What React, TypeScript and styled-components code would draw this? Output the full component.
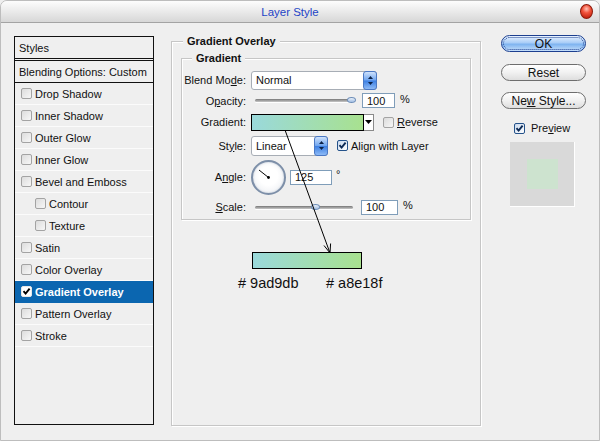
import React from 'react';
import styled, { createGlobalStyle } from 'styled-components';

const GlobalStyle = createGlobalStyle`
  html, body {
    margin: 0;
    padding: 0;
    background: #efefef;
  }
  body {
    font-family: "Liberation Sans", Arial, sans-serif;
    font-size: 11px;
    color: #111;
  }
`;

const styleItems = [
  { name: 'Drop Shadow' },
  { name: 'Inner Shadow' },
  { name: 'Outer Glow' },
  { name: 'Inner Glow' },
  { name: 'Bevel and Emboss' },
  { name: 'Contour', indent: true },
  { name: 'Texture', indent: true },
  { name: 'Satin' },
  { name: 'Color Overlay' },
  { name: 'Gradient Overlay', active: true },
  { name: 'Pattern Overlay' },
  { name: 'Stroke' },
];

type Tone = 'gray' | 'blue' | 'white';

function Check({ tone = 'gray', on = false }: { tone?: Tone; on?: boolean }) {
  return (
    <CheckBox $tone={tone}>
      {on && (
        <svg width="9" height="9" viewBox="0 0 9 9">
          <path d="M1.5 4.2 L3.6 6.6 L7.6 1.6" fill="none" stroke={tone === 'white' ? '#000' : '#0d2a55'} strokeWidth="1.9" />
        </svg>
      )}
    </CheckBox>
  );
}

function Spinner() {
  return (
    <SpinButton>
      <svg width="7" height="11" viewBox="0 0 7 11">
        <path d="M3.5 1 L6 4 L1 4 Z" fill="#0b2146" />
        <path d="M3.5 10 L6 7 L1 7 Z" fill="#0b2146" />
      </svg>
    </SpinButton>
  );
}

function Slider({ width, value }: { width: number; value: number }) {
  return (
    <Track $w={width}>
      <Thumb style={{ left: `${value}%` }} />
    </Track>
  );
}

export default function App() {
  return (
    <>
      <GlobalStyle />
      <Window>
        <TitleBar>
          <Title>Layer Style</Title>
          <CloseButton />
        </TitleBar>

        <Body>
          {/* STYLES LIST */}
          <StylesPanel>
            <PanelHeader>Styles</PanelHeader>
            <BlendRow>Blending Options: Custom</BlendRow>
            {styleItems.map((item) => (
              <StyleItem key={item.name} $indent={!!item.indent} $active={!!item.active}>
                <Check tone={item.active ? 'white' : 'gray'} on={!!item.active} />
                {item.name}
              </StyleItem>
            ))}
          </StylesPanel>

          {/* SETTINGS */}
          <Middle>
            <OuterGroup>
              <OuterLegend>Gradient Overlay</OuterLegend>
              <InnerGroup>
                <InnerLegend>Gradient</InnerLegend>
                <Fields>
                  <Row $h={20}>
                    <Label>Blend Mo<u>d</u>e:</Label>
                    <Select $w={126} $h={19}>
                      Normal
                      <Spinner />
                    </Select>
                  </Row>
                  <Row $h={21}>
                    <Label>O<u>p</u>acity:</Label>
                    <SliderWrap>
                      <Slider width={100} value={97} />
                    </SliderWrap>
                    <NumberInput $w={33} readOnly value="100" />
                    <Unit>%</Unit>
                  </Row>
                  <Row $h={22}>
                    <Label>Gradient:</Label>
                    <GradientField />
                    <DropButton>
                      <svg width="7" height="4" viewBox="0 0 7 4">
                        <path d="M0 0 L7 0 L3.5 4 Z" fill="#000" />
                      </svg>
                    </DropButton>
                    <CheckLabel $gap={9}>
                      <Check tone="gray" />
                      <span><u>R</u>everse</span>
                    </CheckLabel>
                  </Row>
                  <Row $h={25}>
                    <Label>St<u>y</u>le:</Label>
                    <Select $w={77} $h={20}>
                      Linear
                      <Spinner />
                    </Select>
                    <CheckLabel $gap={9}>
                      <Check tone="blue" on />
                      <span>Align with Layer</span>
                    </CheckLabel>
                  </Row>
                  <Row $h={38}>
                    <Label>A<u>n</u>gle:</Label>
                    <Dial>
                      <svg width="31" height="31" viewBox="0 0 31 31">
                        <line x1="15.5" y1="15.5" x2="6" y2="8" stroke="#000" strokeWidth="1" />
                        <circle cx="15.5" cy="15.5" r="1.4" fill="#000" />
                      </svg>
                    </Dial>
                    <NumberInput $w={42} $ml={4} readOnly value="125" />
                    <Degree>°</Degree>
                  </Row>
                  <Row $h={22}>
                    <Label><u>S</u>cale:</Label>
                    <SliderWrap>
                      <Slider width={98} value={62} />
                    </SliderWrap>
                    <NumberInput $w={37} $ml={8} readOnly value="100" />
                    <Unit>%</Unit>
                  </Row>
                </Fields>
              </InnerGroup>

              <Swatch />
              <HexRow>
                <Hex># 9ad9db</Hex>
                <Hex># a8e18f</Hex>
              </HexRow>
            </OuterGroup>

            <Pointer width="310" height="391" viewBox="0 0 310 391">
              <line x1="114" y1="95" x2="159" y2="218" stroke="#000" strokeWidth="1" />
              <polyline points="153,210.5 159,218 159.6,208.5" fill="none" stroke="#000" strokeWidth="1" />
            </Pointer>
          </Middle>

          {/* BUTTONS */}
          <Actions>
            <PillButton $primary>OK</PillButton>
            <PillButton $mt={12}>Reset</PillButton>
            <PillButton $mt={11}>
              <span>Ne<u>w</u> Style...</span>
            </PillButton>
            <PreviewToggle>
              <Check tone="blue" on />
              <span>Pre<u>v</u>iew</span>
            </PreviewToggle>
            <PreviewBox>
              <PreviewSquare />
            </PreviewBox>
          </Actions>
        </Body>
      </Window>
    </>
  );
}

const Window = styled.div`
  width: 600px;
  height: 441px;
  box-sizing: border-box;
  border: 1px solid #bdbdbd;
  border-radius: 7px 7px 0 0;
  background: #efefef;
  display: flex;
  flex-direction: column;
  overflow: hidden;
`;

const TitleBar = styled.div`
  height: 22px;
  flex-shrink: 0;
  box-sizing: border-box;
  border-bottom: 1px solid #a3a3a3;
  background: linear-gradient(#fdfdfd, #ececec 45%, #d7d7d7);
  display: grid;
  grid-template-columns: 1fr auto 1fr;
  align-items: center;
  padding: 0 6px;
`;

const Title = styled.div`
  grid-column: 2;
  padding-right: 20px;
  color: #2444c6;
  font-size: 11.5px;
`;

const CloseButton = styled.div`
  grid-column: 3;
  justify-self: end;
  width: 13px;
  height: 15px;
  box-sizing: border-box;
  border-radius: 50%;
  border: 1px solid #8d1b0c;
  background: radial-gradient(circle at 50% 30%, #ffc2b6 0, #f2533c 38%, #b41300 100%);
`;

const Body = styled.div`
  flex: 1;
  display: flex;
  align-items: flex-start;
  padding: 12px 0 0 13px;
`;

const StylesPanel = styled.div`
  width: 140px;
  height: 389px;
  margin-top: 1px;
  box-sizing: border-box;
  border: 1px solid #111;
  background: #efefef;
`;

const PanelHeader = styled.div`
  height: 21px;
  display: flex;
  align-items: center;
  padding-left: 4px;
  border-bottom: 3px double #111;
`;

const BlendRow = styled.div`
  height: 21px;
  display: flex;
  align-items: center;
  padding-left: 4px;
  border-bottom: 1px solid #111;
  white-space: nowrap;
`;

const StyleItem = styled.div<{ $indent: boolean; $active: boolean }>`
  height: 21px;
  display: flex;
  align-items: center;
  gap: 3px;
  padding-left: ${(p) => (p.$indent ? 20 : 6)}px;
  border-bottom: 1px solid ${(p) => (p.$active ? '#0b66b0' : '#fbfbfb')};
  background: ${(p) => (p.$active ? '#0b66b0' : 'transparent')};
  color: ${(p) => (p.$active ? '#fff' : '#111')};
  font-weight: ${(p) => (p.$active ? 'bold' : 'normal')};
  white-space: nowrap;
`;

const CheckBox = styled.span<{ $tone: Tone }>`
  width: 11px;
  height: 11px;
  flex-shrink: 0;
  box-sizing: border-box;
  border-radius: 2px;
  display: flex;
  align-items: center;
  justify-content: center;
  border: 1px solid
    ${(p) => (p.$tone === 'blue' ? '#24528a' : p.$tone === 'white' ? '#e8e8e8' : '#a3a3a3')};
  background: ${(p) =>
    p.$tone === 'blue'
      ? 'linear-gradient(135deg, #c9d9ee, #ffffff)'
      : p.$tone === 'white'
      ? '#fff'
      : 'linear-gradient(135deg, #dcdcdc, #f7f7f7)'};
`;

const Middle = styled.div`
  position: relative;
  margin-left: 17px;
  width: 310px;
`;

const OuterGroup = styled.fieldset`
  margin: 0;
  padding: 0 9px;
  min-width: 0;
  width: 310px;
  height: 391px;
  box-sizing: border-box;
  border: 1px solid #c6c6c6;
  box-shadow: inset 1px 1px 0 #fff, 1px 1px 0 #fff;
`;

const OuterLegend = styled.legend`
  margin-left: 2px;
  padding: 0 4px;
  font-weight: bold;
  line-height: 13px;
  background: #efefef;
`;

const InnerGroup = styled.fieldset`
  margin: 4px 0 0;
  padding: 0;
  min-width: 0;
  width: 290px;
  box-sizing: border-box;
  border: 1px solid #c6c6c6;
  box-shadow: inset 1px 1px 0 #fff, 1px 1px 0 #fff;
`;

const InnerLegend = styled.legend`
  margin-left: 10px;
  padding: 0 4px;
  font-weight: bold;
  line-height: 13px;
  background: #efefef;
`;

const Fields = styled.div`
  display: flex;
  flex-direction: column;
  padding: 5px 0 1px;
`;

const Row = styled.div<{ $h: number }>`
  display: flex;
  align-items: center;
  height: ${(p) => p.$h}px;
`;

const Label = styled.span`
  width: 64px;
  padding-right: 5px;
  flex-shrink: 0;
  text-align: right;
  white-space: nowrap;
`;

const Select = styled.div<{ $w: number; $h: number }>`
  width: ${(p) => p.$w}px;
  height: ${(p) => p.$h}px;
  box-sizing: border-box;
  display: flex;
  align-items: center;
  padding-left: 4px;
  border: 1px solid #a7adb5;
  border-radius: 3px;
  background: #fff;
`;

const SpinButton = styled.span`
  margin-left: auto;
  width: 14px;
  height: calc(100% + 2px);
  margin-right: -1px;
  box-sizing: border-box;
  border: 1px solid #4a78c4;
  border-radius: 3px;
  background: linear-gradient(#cfe2fc, #6fa5ef 48%, #3c7fe2 52%, #8dbaf6);
  display: flex;
  align-items: center;
  justify-content: center;
`;

const SliderWrap = styled.div`
  margin-left: 4px;
  display: flex;
  align-items: center;
`;

const Track = styled.div<{ $w: number }>`
  position: relative;
  width: ${(p) => p.$w}px;
  height: 3px;
  border-radius: 2px;
  background: linear-gradient(#767676, #c9c9c9);
  box-shadow: 0 1px 0 #fff;
`;

const Thumb = styled.span`
  position: absolute;
  top: -2px;
  width: 9px;
  height: 6px;
  margin-left: -5px;
  box-sizing: border-box;
  border-radius: 50%;
  border: 1px solid #6f8fb8;
  background: linear-gradient(#eef4fc, #9fbce2);
`;

const NumberInput = styled.input<{ $w: number; $ml?: number }>`
  width: ${(p) => p.$w}px;
  height: 15px;
  margin: 0 0 0 ${(p) => p.$ml ?? 7}px;
  padding: 0 0 0 4px;
  box-sizing: border-box;
  border: 1px solid #7f9db9;
  background: #fff;
  font: 11px "Liberation Sans", Arial, sans-serif;
  color: #111;
  outline: none;
`;

const Unit = styled.span`
  margin-left: 5px;
  align-self: flex-start;
  margin-top: 3px;
`;

const GradientField = styled.div`
  width: 113px;
  height: 17px;
  box-sizing: border-box;
  border: 1px solid #000;
  background: linear-gradient(90deg, #9ad9db, #a8e18f);
`;

const DropButton = styled.div`
  width: 10px;
  height: 17px;
  box-sizing: border-box;
  border: 1px solid #8a8a8a;
  border-left: none;
  background: #fff;
  display: flex;
  align-items: center;
  justify-content: center;
`;

const CheckLabel = styled.label<{ $gap: number }>`
  margin-left: ${(p) => p.$gap}px;
  display: flex;
  align-items: center;
  gap: 3px;
  white-space: nowrap;
`;

const Dial = styled.div`
  width: 35px;
  height: 35px;
  box-sizing: border-box;
  border-radius: 50%;
  border: 2px solid #7d8fa8;
  background: radial-gradient(circle at 50% 45%, #ffffff 40%, #e6e9ee);
  box-shadow: inset 0 0 2px #b6c1d0;
  display: flex;
  align-items: center;
  justify-content: center;
`;

const Degree = styled.span`
  margin-left: 4px;
  align-self: flex-start;
  margin-top: 10px;
`;

const Swatch = styled.div`
  margin: 32px 0 0 71px;
  width: 110px;
  height: 17px;
  box-sizing: border-box;
  border: 1px solid #000;
  background: linear-gradient(90deg, #9ad9db, #a8e18f);
`;

const HexRow = styled.div`
  display: flex;
  margin: 6px 0 0 57px;
`;

const Hex = styled.span`
  width: 88px;
  font-size: 14.5px;
  color: #111;
`;

const Pointer = styled.svg`
  position: absolute;
  top: 0;
  left: 0;
  pointer-events: none;
`;

const Actions = styled.div`
  margin-left: 20px;
  width: 85px;
  display: flex;
  flex-direction: column;
`;

const PillButton = styled.div<{ $primary?: boolean; $mt?: number }>`
  margin-top: ${(p) => p.$mt ?? 0}px;
  height: 17px;
  box-sizing: border-box;
  border-radius: 9px;
  border: 1px solid ${(p) => (p.$primary ? '#1d3f8f' : '#6e6e6e')};
  background: ${(p) =>
    p.$primary
      ? 'linear-gradient(#e9f3ff, #a9cdf7 45%, #7fb4f0 55%, #c7e0fb)'
      : 'linear-gradient(#ffffff, #f1f1f1 50%, #dedede)'};
  outline: ${(p) => (p.$primary ? '1px dotted #1d3f8f' : 'none')};
  outline-offset: -3px;
  display: flex;
  align-items: center;
  justify-content: center;
  font-size: 12px;
  color: #111;
  white-space: nowrap;
`;

const PreviewToggle = styled.label`
  margin: 13px 0 0 13px;
  display: flex;
  align-items: center;
  gap: 6px;
`;

const PreviewBox = styled.div`
  margin: 8px 0 0 9px;
  width: 65px;
  height: 65px;
  box-sizing: border-box;
  background: #d9d9d9;
  border-right: 1px solid #fff;
  border-bottom: 1px solid #fff;
  display: flex;
  align-items: center;
  justify-content: center;
`;

const PreviewSquare = styled.div`
  width: 31px;
  height: 30px;
  background: #cde3cf;
`;
